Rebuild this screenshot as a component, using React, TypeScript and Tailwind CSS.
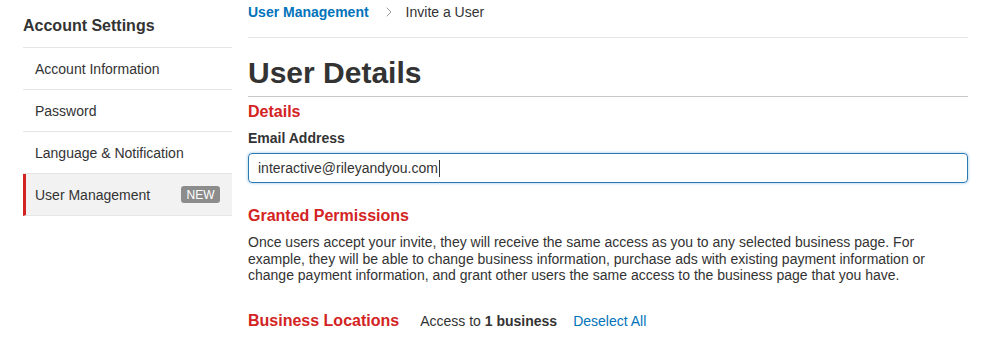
import { ChevronRight } from "lucide-react";

const navItems = [
  { label: "Account Information" },
  { label: "Password" },
  { label: "Language & Notification" },
  { label: "User Management", active: true, badge: "NEW" },
];

function Sidebar() {
  return (
    <aside className="w-[209px] shrink-0">
      <h2 className="pt-[16px] mb-[11px] text-[16px] leading-[20px] font-bold text-[#333]">
        Account Settings
      </h2>
      <ul className="border-t border-[#e6e6e6]">
        {navItems.map((item) => (
          <li
            key={item.label}
            className={`flex h-[42px] items-center justify-between border-b border-[#e6e6e6] pr-[12px] text-[14px] leading-[20px] text-[#333] ${
              item.active
                ? "border-l-[3px] border-l-[#d32323] bg-[#f2f2f2] pl-[9px]"
                : "pl-[12px]"
            }`}
          >
            <span>{item.label}</span>
            {item.badge && (
              <span className="flex h-[17px] w-[39px] items-center justify-center rounded-[3px] bg-[#8c8c8c] text-[12px] leading-none text-white">
                {item.badge}
              </span>
            )}
          </li>
        ))}
      </ul>
    </aside>
  );
}

export default function App() {
  return (
    <div className="flex w-[991px] h-[345px] overflow-hidden bg-white pl-[23px] pr-[23px] gap-[16px] font-['Liberation_Sans',Arial,sans-serif] text-[#333]">
      <Sidebar />

      <main className="flex-1 min-w-0">
        {/* Breadcrumb */}
        <nav className="flex items-center pt-[2px] pb-[15px] border-b border-[#e6e6e6] text-[14px] leading-[20px]">
          <span className="font-bold text-[#0073bb]">User Management</span>
          <ChevronRight
            className="ml-[12px] mr-[9px] h-[16px] w-[16px] text-[#999]"
            strokeWidth={1.5}
          />
          <span className="text-[#333]">Invite a User</span>
        </nav>

        <h1 className="mt-[17px] pb-[5px] border-b border-[#c8c8c8] text-[30px] leading-[36px] font-bold text-[#333]">
          User Details
        </h1>

        <h3 className="mt-[5px] text-[16px] leading-[20px] font-bold text-[#d32323]">
          Details
        </h3>
        <label className="mt-[6px] block text-[14px] leading-[20px] font-bold text-[#333]">
          Email Address
        </label>
        <div className="mt-[5px] flex h-[30px] items-center rounded-[4px] border border-[#2b7ab4] px-[9px] text-[14px] leading-[20px] text-[#333] shadow-[0_0_3px_rgba(0,115,187,0.45)]">
          interactive@rileyandyou.com
          <span className="ml-[1px] inline-block h-[17px] w-[1px] bg-[#333]" />
        </div>

        <h3 className="mt-[23px] text-[16px] leading-[20px] font-bold text-[#d32323]">
          Granted Permissions
        </h3>
        <p className="mt-[8px] text-[14px] leading-[16.5px] text-[#333]">
          Once users accept your invite, they will receive the same access as you to any selected
          business page. For example, they will be able to change business information, purchase
          ads with existing payment information or change payment information, and grant other
          users the same access to the business page that you have.
        </p>

        <div className="mt-[27px] flex items-baseline text-[14px] leading-[20px]">
          <h3 className="text-[16px] font-bold text-[#d32323]">Business Locations</h3>
          <span className="ml-[21px] text-[#333]">
            Access to <b className="font-bold">1 business</b>
          </span>
          <a className="ml-[16px] text-[#0073bb]">Deselect All</a>
        </div>
      </main>
    </div>
  );
}
